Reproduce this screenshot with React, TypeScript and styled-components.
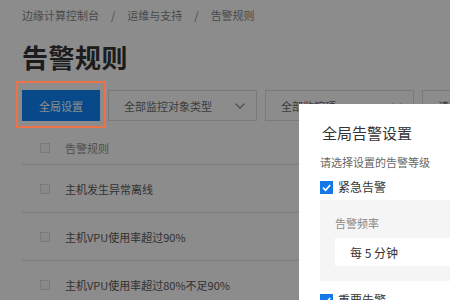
import styled, { createGlobalStyle } from 'styled-components';
import { ChevronDown } from 'lucide-react';

const GlobalStyle = createGlobalStyle`
    html, body {
        margin: 0;
        width: 450px;
        height: 300px;
        overflow: hidden;
        background: #fff;
        font-family: "Noto Sans CJK SC", "Noto Sans", sans-serif;
    }
`;

const Page = styled.div`
    position: relative;
    width: 450px;
    height: 300px;
    padding: 7px 0 0 22px;
    box-sizing: border-box;
    overflow: hidden;
`;

const Breadcrumb = styled.div`
    display: flex;
    align-items: center;
    font-size: 11px;
    line-height: 16px;
    color: #888;
    white-space: nowrap;
`;

const Sep = styled.span`
    margin: 0 12px;
`;

const Title = styled.h1`
    margin: 17px 0 0 0;
    font-size: 26px;
    line-height: 34px;
    font-weight: 700;
    color: #333;
    letter-spacing: 0.5px;
`;

const Toolbar = styled.div`
    display: flex;
    gap: 8px;
    margin-top: 16px;
    white-space: nowrap;
`;

const Highlight = styled.div`
    position: relative;
    display: flex;
    &::after {
        content: '';
        position: absolute;
        left: -6px;
        top: -9px;
        right: -6px;
        bottom: -7px;
        border: 2px solid #ec7249;
        z-index: 20;
    }
`;

const PrimaryButton = styled.button`
    width: 78px;
    height: 31px;
    border: none;
    background: #0d86fa;
    color: #fff;
    font-family: inherit;
    font-size: 11px;
    padding: 0;
`;

const Select = styled.div<{ $width: number }>`
    flex: none;
    width: ${p => p.$width}px;
    height: 31px;
    box-sizing: border-box;
    border: 1px solid #dedede;
    display: flex;
    align-items: center;
    justify-content: space-between;
    padding: 0 8px 0 15px;
    font-size: 11px;
    color: #6e6e6e;
    svg {
        color: #8a8a8a;
    }
`;

const Table = styled.div`
    margin-top: 10px;
    margin-right: -40px;
`;

const Row = styled.div<{ $head?: boolean }>`
    display: flex;
    align-items: center;
    gap: 15px;
    height: ${p => (p.$head ? 34 : 48)}px;
    padding-left: 18px;
    border-bottom: 1px solid #e2e2e2;
    font-size: 11px;
    color: ${p => (p.$head ? '#8e8e8e' : '#5a5a5a')};
    box-sizing: border-box;
`;

const Box = styled.span<{ $checked?: boolean }>`
    flex: none;
    width: ${p => (p.$checked ? 13 : 10)}px;
    height: ${p => (p.$checked ? 13 : 10)}px;
    box-sizing: border-box;
    border: 1px solid ${p => (p.$checked ? '#1677e6' : '#dcdcdc')};
    background: ${p => (p.$checked ? '#1677e6' : '#fafafa')};
    display: flex;
    align-items: center;
    justify-content: center;
`;

const Overlay = styled.div`
    position: absolute;
    inset: 0;
    background: rgba(0, 0, 0, 0.45);
    z-index: 10;
`;

const Modal = styled.div`
    position: absolute;
    left: 299px;
    top: 104px;
    width: 240px;
    height: 260px;
    background: #fff;
    padding: 19px 0 0 21px;
    box-sizing: border-box;
    white-space: nowrap;
`;

const ModalTitle = styled.div`
    margin-left: 2px;
    font-size: 15px;
    line-height: 20px;
    color: #333;
`;

const Hint = styled.div`
    margin-top: 11px;
    font-size: 11px;
    line-height: 16px;
    color: #666;
`;

const Check = styled.label<{ $top: number }>`
    display: flex;
    align-items: center;
    gap: 5px;
    margin-top: ${p => p.$top}px;
    font-size: 12px;
    line-height: 18px;
    color: #333;
`;

const Panel = styled.div`
    margin-top: 4px;
    background: #f5f5f5;
    padding: 15px 0 15px 15px;
`;

const PanelLabel = styled.div`
    font-size: 11px;
    line-height: 16px;
    color: #888;
`;

const Input = styled.div`
    margin-top: 7px;
    height: 28px;
    background: #fff;
    display: flex;
    align-items: center;
    padding-left: 15px;
    font-size: 12px;
    color: #333;
`;

const Tick = () => (
    <svg width="11" height="11" viewBox="0 0 12 12">
        <path d="M2.2 6.2 L5 9 L10 3.2" fill="none" stroke="#fff" strokeWidth="1.8" />
    </svg>
);

const rules = ['主机发生异常离线', '主机VPU使用率超过90%', '主机VPU使用率超过80%不足90%'];

export default function App() {
    return <>
        <GlobalStyle />
        <Page>
            <Breadcrumb>
                边缘计算控制台<Sep>/</Sep>运维与支持<Sep>/</Sep>告警规则
            </Breadcrumb>
            <Title>告警规则</Title>
            <Toolbar>
                <Highlight>
                    <PrimaryButton>全局设置</PrimaryButton>
                </Highlight>
                <Select $width={149}>全部监控对象类型<ChevronDown size={16} strokeWidth={1.8} /></Select>
                <Select $width={149}>全部监控项<ChevronDown size={16} strokeWidth={1.8} /></Select>
                <Select $width={120}>请选择</Select>
            </Toolbar>
            <Table>
                <Row $head><Box />告警规则</Row>
                {rules.map(r => <Row key={r}><Box />{r}</Row>)}
            </Table>
            <Overlay>
                <Modal>
                    <ModalTitle>全局告警设置</ModalTitle>
                    <Hint>请选择设置的告警等级</Hint>
                    <Check $top={8}><Box $checked><Tick /></Box>紧急告警</Check>
                    <Panel>
                        <PanelLabel>告警频率</PanelLabel>
                        <Input>每 5 分钟</Input>
                    </Panel>
                    <Check $top={10}><Box $checked><Tick /></Box>重要告警</Check>
                </Modal>
            </Overlay>
        </Page>
    </>;
}
